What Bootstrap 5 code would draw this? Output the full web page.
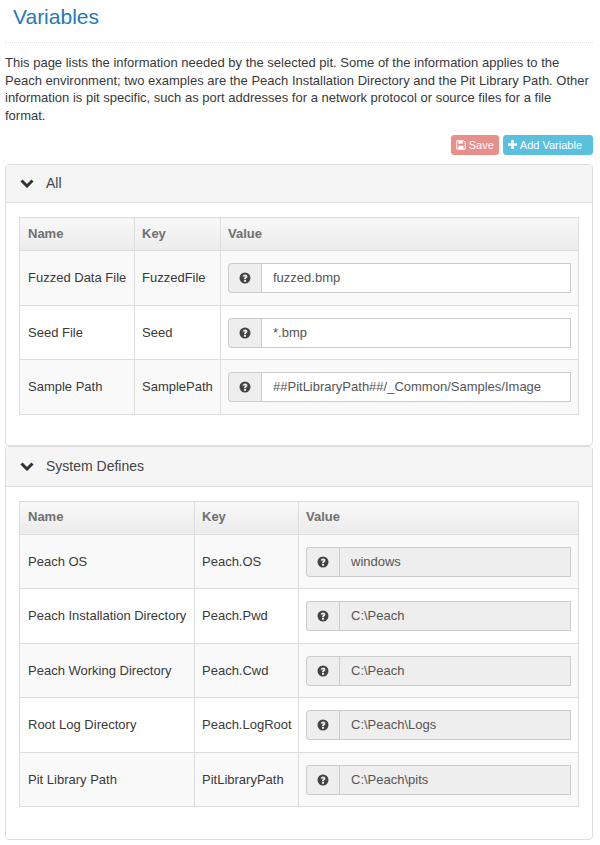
<!DOCTYPE html>
<html lang="en">
<head>
  <meta charset="UTF-8">
  <meta name="viewport" content="width=device-width, initial-scale=1">
  <title>Variables</title>
  <link href="https://cdn.jsdelivr.net/npm/bootstrap@5.3.0/dist/css/bootstrap.min.css" rel="stylesheet">
  <style>
    body {
      font-family: "Liberation Sans", Arial, sans-serif;
      font-size: 13px;
      color: #393939;
      background: #fff;
    }
    .page-wrap { padding: 0 7px 0 5px; }
    .page-head {
      height: 43px;
      padding: 5px 0 0 8px;
      border-bottom: 1px dotted #e2e2e2;
    }
    .page-head h1 {
      margin: 0;
      font-size: 21px;
      line-height: 24px;
      font-weight: 400;
      color: #2679b5;
    }
    .intro {
      margin: 11px 0 0;
      line-height: 17.6px;
    }
    .tool-row { margin-top: 11px; gap: 4px; height: 20px; }
    .tool-btn {
      display: flex;
      align-items: center;
      gap: 3px;
      height: 20px;
      font-size: 11px;
      color: #fff;
      border: 1px solid;
      border-radius: 3px;
    }
    .tool-save { background: #e78f8a; border-color: #e78f8a; padding: 0 4px 1px 4px; }
    .tool-add { background: #5bc0de; border-color: #5bc0de; padding: 0 10px 1px 4px; }
    .var-panel {
      border: 1px solid #ddd;
      border-radius: 4px;
      background: #fff;
    }
    .first-panel { margin-top: 9px; height: 282px; }
    .second-panel { height: 394px; }
    .var-head {
      display: flex;
      align-items: center;
      gap: 12px;
      height: 38px;
      padding-left: 14px;
      font-size: 14px;
      color: #444;
      background: #f5f5f5;
      border-bottom: 1px solid #ddd;
    }
    .second-panel .var-head { height: 39.5px; }
    .var-body { padding: 14px 13px; }
    .var-table {
      width: 560px;
      table-layout: fixed;
      border-collapse: collapse;
    }
    .var-table th, .var-table td {
      border: 1px solid #ddd;
      padding: 0 7px;
      vertical-align: middle;
    }
    .var-table th:first-child, .var-table td:first-child { padding-left: 8px; }
    .var-table th {
      height: 33px;
      padding-bottom: 2px;
      font-weight: 700;
      color: #707070;
      background: linear-gradient(#f8f8f8, #ececec);
    }
    .var-table td { height: 54.5px; color: #393939; white-space: nowrap; }
    .var-table tbody tr:nth-child(odd) td { background: #f9f9f9; }
    .field {
      display: flex;
      height: 30px;
    }
    .field-tip {
      display: flex;
      align-items: center;
      justify-content: center;
      flex: 0 0 33px;
      background: #eee;
      border: 1px solid #ccc;
      border-right: 0;
      border-radius: 4px 0 0 4px;
    }
    .field-val {
      flex: 1;
      min-width: 0;
      padding: 0 11px;
      font-size: 13px;
      font-family: inherit;
      color: #555;
      background: #fff;
      border: 1px solid #ccc;
      border-radius: 0;
      outline: 0;
    }
    .field-val:disabled { background: #eee; color: #555; }
  </style>
</head>
<body>
  <div class="page-wrap">
    <div class="page-head"><h1>Variables</h1></div>
    <p class="intro">This page lists the information needed by the selected pit. Some of the information applies to the Peach environment; two examples are the Peach Installation Directory and the Pit Library Path. Other information is pit specific, such as port addresses for a network protocol or source files for a file format.</p>

    <div class="d-flex justify-content-end tool-row">
      <div class="tool-btn tool-save">
        <svg width="10" height="10" viewBox="0 0 12 12"><path fill="none" stroke="#fff" stroke-width="1.2" d="M1 1h8.500L11 2.500V11H1z"/><path fill="#fff" d="M3 1h5v3.500H3zM3 7h6v4H3z"/></svg>
        Save
      </div>
      <div class="tool-btn tool-add">
        <svg width="9" height="9" viewBox="0 0 10 10"><path fill="#fff" d="M3.500 0h3v3.500H10v3H6.500V10h-3V6.500H0v-3h3.500z"/></svg>
        Add Variable
      </div>
    </div>

    <!-- All -->
    <div class="var-panel first-panel">
      <div class="var-head">
        <svg width="14" height="9" viewBox="0 0 14 9"><path fill="none" stroke="#333" stroke-width="3" d="M1.500 1.500L7 7l5.500-5.500"/></svg>
        All
      </div>
      <div class="var-body">
        <table class="var-table" id="allTable">
          <colgroup><col style="width:115px"><col style="width:86px"><col></colgroup>
          <thead><tr><th>Name</th><th>Key</th><th>Value</th></tr></thead>
          <tbody></tbody>
        </table>
      </div>
    </div>

    <!-- System Defines -->
    <div class="var-panel second-panel">
      <div class="var-head">
        <svg width="14" height="9" viewBox="0 0 14 9"><path fill="none" stroke="#333" stroke-width="3" d="M1.500 1.500L7 7l5.500-5.500"/></svg>
        System Defines
      </div>
      <div class="var-body">
        <table class="var-table" id="sysTable">
          <colgroup><col style="width:175px"><col style="width:104px"><col></colgroup>
          <thead><tr><th>Name</th><th>Key</th><th>Value</th></tr></thead>
          <tbody></tbody>
        </table>
      </div>
    </div>
  </div>

  <script>
    const tipIcon = '<svg width="12" height="12" viewBox="0 0 12 12"><path fill="#444" fill-rule="evenodd" d="M6 .5a5.500 5.500 0 1 0 0 11 5.500 5.500 0 0 0 0-11zM5 8h2v1.700H5zM3.700 4.500C3.900 3.200 4.900 2.500 6.100 2.500c1.300 0 2.300.8 2.300 2 0 .9-.5 1.400-1.100 1.800-.3.200-.4.400-.4.900H5.100c0-1 .2-1.500.8-1.900.4-.3.600-.5.600-.7 0-.3-.2-.4-.5-.4-.3 0-.5.200-.6.600z"/></svg>';

    const allRows = [
      ['Fuzzed Data File', 'FuzzedFile', 'fuzzed.bmp'],
      ['Seed File', 'Seed', '*.bmp'],
      ['Sample Path', 'SamplePath', '##PitLibraryPath##/_Common/Samples/Image']
    ];
    const sysRows = [
      ['Peach OS', 'Peach.OS', 'windows'],
      ['Peach Installation Directory', 'Peach.Pwd', 'C:\\Peach'],
      ['Peach Working Directory', 'Peach.Cwd', 'C:\\Peach'],
      ['Root Log Directory', 'Peach.LogRoot', 'C:\\Peach\\Logs'],
      ['Pit Library Path', 'PitLibraryPath', 'C:\\Peach\\pits']
    ];

    function fillTable(id, rows, disabled) {
      document.querySelector('#' + id + ' tbody').innerHTML = rows.map(r => `
        <tr>
          <td>${r[0]}</td>
          <td>${r[1]}</td>
          <td><div class="field"><span class="field-tip">${tipIcon}</span><input class="field-val" value="${r[2]}" ${disabled ? 'disabled' : ''}></div></td>
        </tr>`).join('');
    }
    fillTable('allTable', allRows, false);
    fillTable('sysTable', sysRows, true);
  </script>
  <script src="https://cdn.jsdelivr.net/npm/bootstrap@5.3.0/dist/js/bootstrap.bundle.min.js"></script>
</body>
</html>
